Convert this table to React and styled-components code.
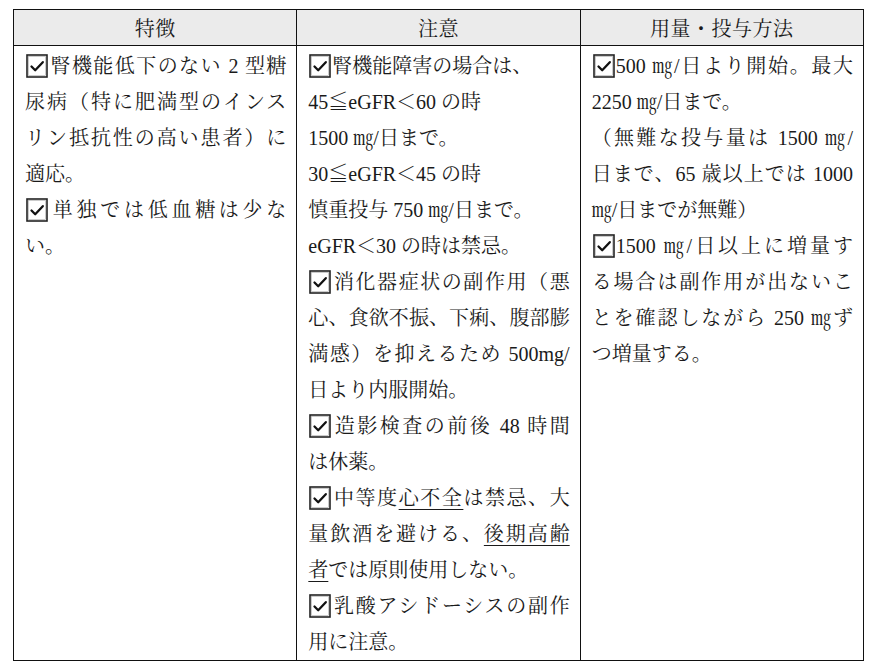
import React from "react";
import styled, { createGlobalStyle } from "styled-components";

const GlobalStyle = createGlobalStyle`
    html, body {
        margin: 0;
        padding: 0;
        background: #ffffff;
    }
    body {
        font-family: "Liberation Serif", "Noto Serif CJK JP", "Noto Sans CJK JP", serif;
        color: #1a1a1a;
    }
`;

const Page = styled.div`
    padding: 9px 0 0 13px;
`;

const Table = styled.div`
    display: grid;
    grid-template-columns: repeat(3, 1fr);
    width: 850px;
    border-top: 1px solid #111;
    border-left: 1px solid #111;
`;

const HeadCell = styled.div`
    height: 35px;
    display: flex;
    align-items: center;
    justify-content: center;
    background: #ebebeb;
    border-right: 1px solid #111;
    border-bottom: 1px solid #111;
    font-size: 20px;
    letter-spacing: 0.5px;
`;

const BodyCell = styled.div`
    padding: 2px 10px 0 11px;
    border-right: 1px solid #111;
    border-bottom: 1px solid #111;
    font-size: 20px;
    line-height: 36px;
`;

const Line = styled.div`
    height: 36px;
    white-space: nowrap;
    text-align: ${(p) => (p.$justify ? "justify" : "left")};
    text-align-last: ${(p) => (p.$justify ? "justify" : "auto")};
    text-justify: inter-character;
`;

const Under = styled.span`
    text-decoration: underline;
    text-decoration-thickness: 1px;
    text-underline-offset: 4px;
`;

const BoxWrap = styled.svg`
    display: inline-block;
    width: 22px;
    height: 24px;
    vertical-align: -5px;
    margin: 0 1px 0 1px;
`;

const CheckBox = () => (
    <BoxWrap viewBox="0 0 22 24">
        <rect x="1" y="1" width="20" height="22" fill="none" stroke="#222" strokeWidth="1.6" />
        <rect x="2.4" y="2.4" width="17.2" height="19.2" fill="none" stroke="#aaa" strokeWidth="0.6" />
        <path d="M5.5 12.5 L9.2 16.2 L16.8 8.2" fill="none" stroke="#111" strokeWidth="2.3" strokeLinecap="round" strokeLinejoin="round" />
    </BoxWrap>
);

const headings = ["特徴", "注意", "用量・投与方法"];

const columns = [
    [
        { check: true, j: true, t: "腎機能低下のない 2 型糖" },
        { j: true, t: "尿病（特に肥満型のインス" },
        { j: true, t: "リン抵抗性の高い患者）に" },
        { t: "適応。" },
        { check: true, j: true, t: "単独では低血糖は少な" },
        { t: "い。" }
    ],
    [
        { check: true, t: "腎機能障害の場合は、" },
        { t: "45≦eGFR＜60 の時" },
        { t: "1500 ㎎/日まで。" },
        { t: "30≦eGFR＜45 の時" },
        { t: "慎重投与 750 ㎎/日まで。" },
        { t: "eGFR＜30 の時は禁忌。" },
        { check: true, j: true, t: "消化器症状の副作用（悪" },
        { j: true, t: "心、食欲不振、下痢、腹部膨" },
        { j: true, t: "満感）を抑えるため 500mg/" },
        { t: "日より内服開始。" },
        { check: true, j: true, t: "造影検査の前後 48 時間" },
        { t: "は休薬。" },
        { check: true, j: true, t: ["中等度", <Under key="u">心不全</Under>, "は禁忌、大"] },
        { j: true, t: ["量飲酒を避ける、", <Under key="u">後期高齢</Under>] },
        { t: [<Under key="u">者</Under>, "では原則使用しない。"] },
        { check: true, j: true, t: "乳酸アシドーシスの副作" },
        { t: "用に注意。" }
    ],
    [
        { check: true, j: true, t: "500 ㎎/日より開始。最大" },
        { t: "2250 ㎎/日まで。" },
        { j: true, t: "（無難な投与量は 1500 ㎎/" },
        { j: true, t: "日まで、65 歳以上では 1000" },
        { t: "㎎/日までが無難）" },
        { check: true, j: true, t: "1500 ㎎/日以上に増量す" },
        { j: true, t: "る場合は副作用が出ないこ" },
        { j: true, t: "とを確認しながら 250 ㎎ず" },
        { t: "つ増量する。" }
    ]
];

export default function App() {
    return (
        <Page>
            <GlobalStyle />
            <Table>
                {headings.map((h) => (
                    <HeadCell key={h}>{h}</HeadCell>
                ))}
                {columns.map((lines, ci) => (
                    <BodyCell key={ci}>
                        {lines.map((line, li) => (
                            <Line key={li} $justify={line.j}>
                                {line.check && <CheckBox />}
                                {line.t}
                            </Line>
                        ))}
                    </BodyCell>
                ))}
            </Table>
        </Page>
    );
}
